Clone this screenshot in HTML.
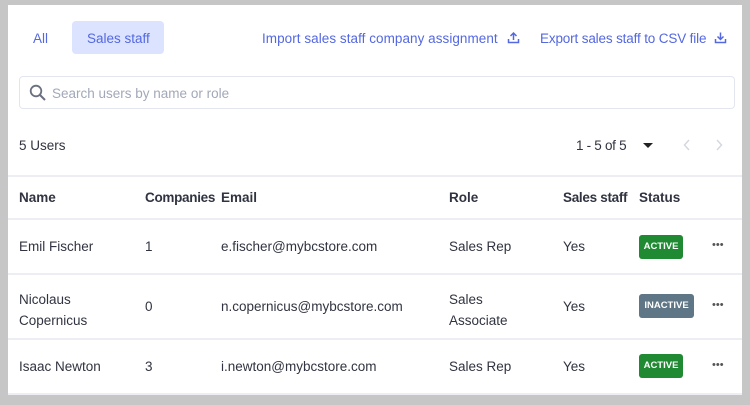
<!DOCTYPE html>
<html><head><style>
body{margin:0;width:750px;height:405px;background:#c6c6c6;font-family:"Liberation Sans",sans-serif;overflow:hidden;position:relative;color:#313440}
.p{position:absolute;left:8px;top:5px;width:734px;height:390px;background:#fff}
.a{position:absolute;white-space:nowrap;font-size:13.5px}
.l{color:#5468e0;font-size:13.5px}
.pill{position:absolute;left:72px;top:21px;width:92px;height:33px;background:#dbe3fe;border-radius:4px}
.s{position:absolute;left:19px;top:76px;width:716px;height:33px;border:1px solid #e3e6ef;border-radius:4px;box-sizing:border-box}
.hr{position:absolute;left:8px;width:734px;height:2px;background:#eceef3}
.b{font-weight:bold}
.badge{position:absolute;color:#fff;font-size:9.5px;font-weight:bold;border-radius:3px;text-align:center;line-height:24px;height:24px}
.g{background:#1f8a32}
.i{background:#5e7686}
.dots{position:absolute;font-size:11px;color:#555;letter-spacing:0px}
</style></head><body>
<div class="p"></div>
<div class="pill"></div>
<div class="a l" style="left:33px;top:31px">All</div>
<div class="a l" style="left:87px;top:31px">Sales staff</div>
<div class="a l" style="left:262px;top:31px;letter-spacing:0.05px">Import sales staff company assignment</div>
<svg style="position:absolute;left:507px;top:31px" width="13" height="13" viewBox="0 0 13 13"><path d="M6.5 9V2M3.5 5l3-3 3 3M1.5 8v3.5h10V8" stroke="#5468e0" stroke-width="1.5" fill="none"/></svg>
<div class="a l" style="left:540px;top:31px;letter-spacing:-0.15px">Export sales staff to CSV file</div>
<svg style="position:absolute;left:714px;top:31px" width="13" height="13" viewBox="0 0 13 13"><path d="M6.5 1.5v7M3.5 5.5l3 3 3-3M1.5 8v3.5h10V8" stroke="#5468e0" stroke-width="1.5" fill="none"/></svg>
<div class="s"></div>
<svg style="position:absolute;left:29px;top:84px" width="18" height="18" viewBox="0 0 18 18"><circle cx="7" cy="7" r="5.3" stroke="#6b7080" stroke-width="1.8" fill="none"/><path d="M11 11l5 5" stroke="#6b7080" stroke-width="2"/></svg>
<div class="a" style="left:52px;top:86px;color:#a3a8b8">Search users by name or role</div>
<div class="a" style="left:19px;top:138px">5 Users</div>
<div class="a" style="left:576px;top:138px;letter-spacing:-0.3px">1 - 5 of 5</div>
<svg style="position:absolute;left:643px;top:142px" width="10" height="7"><path d="M0 1h10L5 6z" fill="#222"/></svg>
<svg style="position:absolute;left:683px;top:139px" width="8" height="12"><path d="M6 1L1.5 6 6 11" stroke="#d5d8e0" stroke-width="1.5" fill="none"/></svg>
<svg style="position:absolute;left:715px;top:139px" width="8" height="12"><path d="M2 1l4.5 5L2 11" stroke="#d5d8e0" stroke-width="1.5" fill="none"/></svg>
<div class="hr" style="top:175px"></div>
<div class="a b" style="left:19px;top:190px">Name</div>
<div class="a b" style="left:145px;top:190px;letter-spacing:-0.3px">Companies</div>
<div class="a b" style="left:221px;top:190px">Email</div>
<div class="a b" style="left:449px;top:190px">Role</div>
<div class="a b" style="left:563px;top:190px;letter-spacing:-0.3px">Sales staff</div>
<div class="a b" style="left:639px;top:190px">Status</div>
<div class="hr" style="top:218px"></div>
<div class="a" style="left:19px;top:239px">Emil Fischer</div>
<div class="a" style="left:145px;top:239px">1</div>
<div class="a" style="left:221px;top:239px">e.fischer@mybcstore.com</div>
<div class="a" style="left:449px;top:239px">Sales Rep</div>
<div class="a" style="left:563px;top:239px">Yes</div>
<div class="badge g" style="left:639px;top:235px;width:44px">ACTIVE</div>
<div class="dots" style="left:712px;top:239px">•••</div>
<div class="hr" style="top:273px"></div>
<div class="a" style="left:19px;top:289px;line-height:21px">Nicolaus<br>Copernicus</div>
<div class="a" style="left:145px;top:299px">0</div>
<div class="a" style="left:221px;top:299px">n.copernicus@mybcstore.com</div>
<div class="a" style="left:449px;top:289px;line-height:21px">Sales<br>Associate</div>
<div class="a" style="left:563px;top:299px">Yes</div>
<div class="badge i" style="left:639px;top:294px;width:55px">INACTIVE</div>
<div class="dots" style="left:712px;top:299px">•••</div>
<div class="hr" style="top:338px"></div>
<div class="a" style="left:19px;top:359px">Isaac Newton</div>
<div class="a" style="left:145px;top:359px">3</div>
<div class="a" style="left:221px;top:359px">i.newton@mybcstore.com</div>
<div class="a" style="left:449px;top:359px">Sales Rep</div>
<div class="a" style="left:563px;top:359px">Yes</div>
<div class="badge g" style="left:639px;top:354px;width:44px">ACTIVE</div>
<div class="dots" style="left:712px;top:359px">•••</div>
<div class="hr" style="top:393px"></div>
</body></html>
